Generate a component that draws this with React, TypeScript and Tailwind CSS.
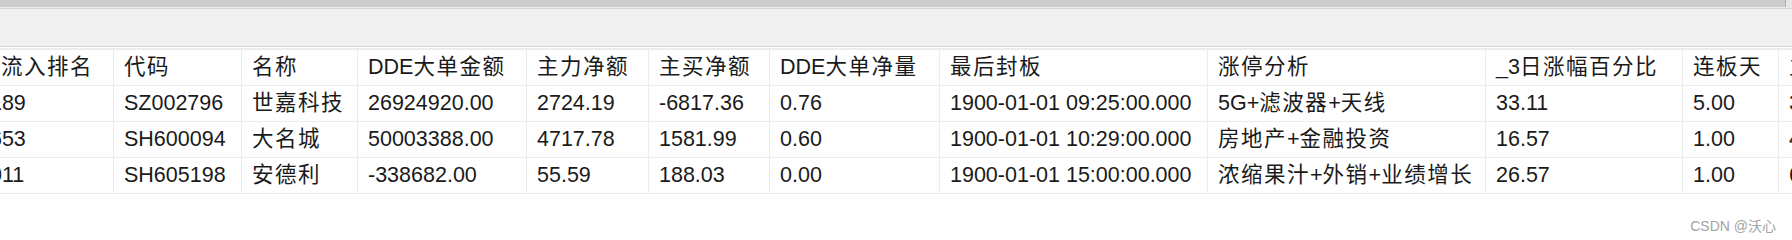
import React from "react";

const columns = [
  "净流入排名",
  "代码",
  "名称",
  "DDE大单金额",
  "主力净额",
  "主买净额",
  "DDE大单净量",
  "最后封板",
  "涨停分析",
  "_3日涨幅百分比",
  "连板天",
  "主力资金",
];

const rows = [
  ["2189", "SZ002796", "世嘉科技", "26924920.00", "2724.19", "-6817.36", "0.76", "1900-01-01 09:25:00.000", "5G+滤波器+天线", "33.11", "5.00", "3.12"],
  ["1653", "SH600094", "大名城", "50003388.00", "4717.78", "1581.99", "0.60", "1900-01-01 10:29:00.000", "房地产+金融投资", "16.57", "1.00", "4.05"],
  ["1011", "SH605198", "安德利", "-338682.00", "55.59", "188.03", "0.00", "1900-01-01 15:00:00.000", "浓缩果汁+外销+业绩增长", "26.57", "1.00", "6.33"],
];

// CJK runs get a little extra spacing, like the original grid font
function Text({ value }: { value: string }) {
  const parts = value.split(/([\u4e00-\u9fff]+)/).filter(Boolean);
  return (
    <>
      {parts.map((p, i) =>
        /[\u4e00-\u9fff]/.test(p) ? (
          <span key={i} className="tracking-[1.5px]">
            {p}
          </span>
        ) : (
          <span key={i}>{p}</span>
        )
      )}
    </>
  );
}

function Cell({ value }: { value: string }) {
  return (
    <div className="h-9 flex items-center pl-[10px] border-r border-b border-[#ececec] whitespace-nowrap overflow-hidden">
      <Text value={value} />
    </div>
  );
}

export default function App() {
  return (
    <div
      className="w-[1792px] h-[240px] bg-white overflow-hidden text-[#1a1a1a]"
      style={{ fontFamily: '"Liberation Sans", "Noto Sans CJK SC", sans-serif' }}
    >
      {/* toolbar strip */}
      <div className="flex h-[7px]">
        <div className="flex-1 bg-[#cdcdcd]" />
        <div className="w-px bg-[#a9a9a9]" />
        <div className="w-[6px] bg-[#e6e6e6]" />
      </div>
      <div className="h-px bg-[#e9e9e9]" />
      <div className="h-px bg-[#d6d6d6]" />
      <div className="h-[37px] bg-[#f0f0f0]" />
      <div className="h-px bg-[#d3d3d3]" />
      <div className="h-px bg-white" />
      <div className="h-[2px] bg-[#ececec]" />

      {/* grid, scrolled sideways */}
      <div className="overflow-hidden">
        <div className="ml-[-32px] grid grid-cols-[146px_128px_116px_169px_122px_121px_170px_268px_278px_197px_96px_120px] text-[21.5px]">
          {columns.map((c) => (
            <Cell key={c} value={c} />
          ))}
          {rows.map((r, i) => r.map((v, j) => <Cell key={i + "-" + j} value={v} />))}
        </div>
      </div>

      <div className="flex justify-end pr-[16px] pt-[25px]">
        <span className="text-[14px] leading-none text-[#a3a3a3]">CSDN @沃心</span>
      </div>
    </div>
  );
}
